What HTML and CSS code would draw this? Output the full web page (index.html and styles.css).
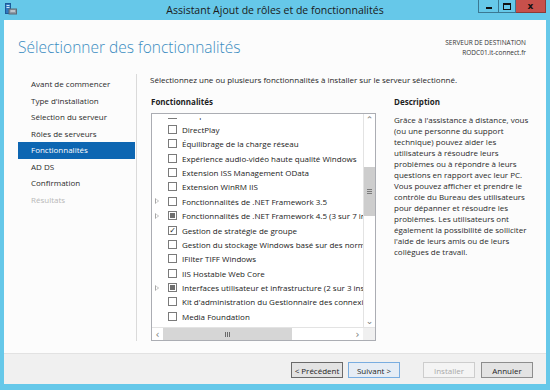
FILE: index.html
```html
<!DOCTYPE html>
<html lang="fr">
<head>
  <meta charset="UTF-8">
  <title>Assistant Ajout de rôles et de fonctionnalités</title>
  <link rel="stylesheet" href="styles.css">
</head>
<body>

<div class="window">
  <div class="titlebar">
    <svg class="app-icon" width="12" height="12" viewBox="0 0 12 12">
      <rect x="0.5" y="0.5" width="5" height="10" fill="#2f79c0" stroke="#1d5a99"/>
      <rect x="1.5" y="2" width="3" height="1" fill="#cfe4f7"/>
      <rect x="1.5" y="4" width="3" height="1" fill="#cfe4f7"/>
      <rect x="4" y="6" width="7.5" height="5" fill="#8f9aa5" stroke="#5d6975"/>
      <rect x="5.5" y="7.5" width="4.5" height="1" fill="#e9eef2"/>
    </svg>
    <div class="title">Assistant Ajout de rôles et de fonctionnalités</div>
    <div class="controls">
      <span class="ctl ctl-min"><i></i></span>
      <span class="ctl ctl-max"><i></i></span>
      <span class="ctl ctl-close">x</span>
    </div>
  </div>

  <div class="frame">
    <div class="header">
      <h1>Sélectionner des fonctionnalités</h1>
      <div class="dest">SERVEUR DE DESTINATION<br>RODC01.it-connect.fr</div>
    </div>

    <div class="main">
      <ul class="nav">
        <li>Avant de commencer</li>
        <li>Type d'installation</li>
        <li>Sélection du serveur</li>
        <li>Rôles de serveurs</li>
        <li class="active">Fonctionnalités</li>
        <li>AD DS</li>
        <li>Confirmation</li>
        <li class="disabled">Résultats</li>
      </ul>

      <div class="content">
        <p class="intro">Sélectionnez une ou plusieurs fonctionnalités à installer sur le serveur sélectionné.</p>

        <div class="cols">
          <div class="features">
            <h2>Fonctionnalités</h2>
            <div class="listbox">
              <div class="list-area">
                <div class="rows">
                  <div class="row"><span class="exp"></span><span class="chk"></span><span class="lbl">Compression différentielle à distance</span></div>
                  <div class="row"><span class="exp"></span><span class="chk"></span><span class="lbl">DirectPlay</span></div>
                  <div class="row"><span class="exp"></span><span class="chk"></span><span class="lbl">Équilibrage de la charge réseau</span></div>
                  <div class="row"><span class="exp"></span><span class="chk"></span><span class="lbl">Expérience audio-vidéo haute qualité Windows</span></div>
                  <div class="row"><span class="exp"></span><span class="chk"></span><span class="lbl">Extension ISS Management OData</span></div>
                  <div class="row"><span class="exp"></span><span class="chk"></span><span class="lbl">Extension WinRM IIS</span></div>
                  <div class="row"><span class="exp has-children"></span><span class="chk"></span><span class="lbl">Fonctionnalités de .NET Framework 3.5</span></div>
                  <div class="row"><span class="exp has-children"></span><span class="chk partial"></span><span class="lbl">Fonctionnalités de .NET Framework 4.5 (3 sur 7 installé(s))</span></div>
                  <div class="row"><span class="exp"></span><span class="chk checked">&#10003;</span><span class="lbl">Gestion de stratégie de groupe</span></div>
                  <div class="row"><span class="exp"></span><span class="chk"></span><span class="lbl">Gestion du stockage Windows basé sur des normes</span></div>
                  <div class="row"><span class="exp"></span><span class="chk"></span><span class="lbl">IFilter TIFF Windows</span></div>
                  <div class="row"><span class="exp"></span><span class="chk"></span><span class="lbl">IIS Hostable Web Core</span></div>
                  <div class="row"><span class="exp has-children"></span><span class="chk partial"></span><span class="lbl">Interfaces utilisateur et infrastructure (2 sur 3 installé(s))</span></div>
                  <div class="row"><span class="exp"></span><span class="chk"></span><span class="lbl">Kit d'administration du Gestionnaire des connexions RAS</span></div>
                  <div class="row"><span class="exp"></span><span class="chk"></span><span class="lbl">Media Foundation</span></div>
                </div>
                <div class="vscroll">
                  <div class="arrow">&#8963;</div>
                  <div class="track">
                    <div class="vthumb"><span class="grip-h"></span></div>
                  </div>
                  <div class="arrow">&#8964;</div>
                </div>
              </div>
              <div class="hscroll">
                <div class="arrow">&lsaquo;</div>
                <div class="htrack">
                  <div class="hthumb"><span class="grip-v"></span></div>
                </div>
                <div class="arrow">&rsaquo;</div>
                <div class="corner"></div>
              </div>
            </div>
          </div>

          <div class="desc">
            <h2>Description</h2>
            <p>Grâce à l'assistance à distance, vous (ou une personne du support technique) pouvez aider les utilisateurs à résoudre leurs problèmes ou à répondre à leurs questions en rapport avec leur PC. Vous pouvez afficher et prendre le contrôle du Bureau des utilisateurs pour dépanner et résoudre les problèmes. Les utilisateurs ont également la possibilité de solliciter l'aide de leurs amis ou de leurs collègues de travail.</p>
          </div>
        </div>
      </div>
    </div>

    <div class="footer">
      <button class="btn btn-prev">&lt; Précédent</button>
      <button class="btn btn-next">Suivant &gt;</button>
      <button class="btn btn-install" disabled>Installer</button>
      <button class="btn btn-cancel">Annuler</button>
    </div>
  </div>
</div>

</body>
</html>
```

FILE: styles.css
```css
html, body {
  margin: 0;
  padding: 0;
}

body {
  background-color: #66c8e9;
  font-family: 'Open Sans', 'Noto Sans', sans-serif;
  font-size: 8px;
  color: #1e1e1e;
}

.window {
  width: 550px;
  height: 390px;
  display: flex;
  flex-direction: column;
}

/* TITLE BAR */
.titlebar {
  height: 20px;
  display: flex;
  align-items: flex-start;
  position: relative;
}

.app-icon {
  margin: 3px 0 0 5px;
}

.title {
  position: absolute;
  left: 0;
  right: 0;
  top: 3px;
  text-align: center;
  font-size: 10.5px;
  line-height: 14px;
  color: #1a1a1a;
}

.controls {
  margin-left: auto;
  margin-right: 4px;
  display: flex;
  position: relative;
  z-index: 1;
}

.ctl {
  height: 13px;
  display: flex;
  align-items: center;
  justify-content: center;
  box-sizing: border-box;
  border: 1px solid #3b7893;
  border-top: none;
}

.ctl-min {
  width: 20px;
  border-right: none;
}

.ctl-min i {
  width: 6px;
  height: 2px;
  margin-top: 3px;
  background: #111;
}

.ctl-max {
  width: 18px;
}

.ctl-max i {
  width: 6px;
  height: 4px;
  border: 1px solid #111;
  border-top-width: 2px;
}

.ctl-close {
  width: 30px;
  background: #c7504b;
  border-left: none;
  border-color: #8e3a36;
  font-family: 'DejaVu Sans', sans-serif;
  font-weight: bold;
  font-size: 9px;
  color: #111;
  line-height: 12px;
}

/* FRAME */
.frame {
  margin: 0 4px;
  height: 364px;
  background: #fcfcfc;
  display: flex;
  flex-direction: column;
}

.header {
  height: 54px;
  display: flex;
  justify-content: space-between;
  align-items: flex-start;
  padding: 0 20px 0 14px;
  box-sizing: border-box;
}

h1 {
  margin: 15px 0 0;
  font-size: 15.5px;
  font-weight: 300;
  line-height: 24px;
  color: #3a8cc1;
}

.dest {
  margin-top: 18px;
  font-size: 6.5px;
  line-height: 10px;
  text-align: right;
  color: #333;
}

.main {
  height: 279px;
  display: flex;
  align-items: flex-start;
}

/* NAV */
.nav {
  list-style: none;
  margin: 0;
  width: 133px;
  height: 267px;
  padding: 2px 1px 0 14px;
  box-sizing: border-box;
  border-right: 1px solid #dadada;
}

.nav li {
  height: 16.5px;
  line-height: 16.5px;
  padding-left: 13px;
  font-size: 8px;
  color: #2b2b2b;
}

.nav li.active {
  background: #0d66b2;
  color: #fff;
}

.nav li.disabled {
  color: #b8b8b8;
}

/* CONTENT */
.content {
  margin-left: 13px;
  flex: 1;
}

.intro {
  margin: 0;
  line-height: 11px;
}

.cols {
  display: flex;
  margin-top: 11px;
}

h2 {
  margin: 0;
  font-size: 8px;
  font-weight: bold;
  line-height: 11px;
}

.features h2 {
  padding-left: 1px;
}

.listbox {
  margin-top: 6px;
  margin-left: 1px;
  width: 225px;
  height: 228px;
  box-sizing: border-box;
  border: 1px solid #abadb3;
  background: #fff;
  display: flex;
  flex-direction: column;
}

.list-area {
  display: flex;
  height: 213px;
  overflow: hidden;
}

.rows {
  flex: 1;
  overflow: hidden;
  margin-top: 3.5px;
}

.rows .row:first-child {
  margin-top: -9.8px;
}

.row {
  height: 14.4px;
  display: flex;
  align-items: center;
  white-space: nowrap;
}

.exp {
  width: 5px;
  height: 7px;
  margin-left: 3px;
  flex: none;
}

.exp.has-children {
  width: 0;
  height: 0;
  border-left: 4px solid #a6a6a6;
  border-top: 3.5px solid transparent;
  border-bottom: 3.5px solid transparent;
  position: relative;
  margin-right: 1px;
}

.exp.has-children::after {
  content: "";
  position: absolute;
  left: -3px;
  top: -2px;
  border-left: 2.4px solid #fff;
  border-top: 2px solid transparent;
  border-bottom: 2px solid transparent;
}

.chk {
  flex: none;
  width: 9px;
  height: 9px;
  margin-left: 8px;
  box-sizing: border-box;
  border: 1px solid #7a7a7a;
  background: #fff;
  display: flex;
  align-items: center;
  justify-content: center;
  font-size: 8px;
  line-height: 9px;
  color: #222;
}

.chk.partial::after {
  content: "";
  width: 5px;
  height: 5px;
  background: #6e6e6e;
}

.chk.checked {
  font-family: 'DejaVu Sans', sans-serif;
  font-size: 8px;
  font-weight: bold;
}

.lbl {
  margin-left: 5px;
  color: #222;
}

/* SCROLLBARS */
.vscroll {
  width: 12px;
  flex: none;
  border-left: 1px solid #e3e3e3;
  box-sizing: border-box;
  display: flex;
  flex-direction: column;
  background: #fff;
}

.arrow {
  height: 12px;
  width: 11px;
  flex: none;
  display: flex;
  align-items: center;
  justify-content: center;
  color: #7a7a7a;
  font-size: 9px;
  font-family: 'DejaVu Sans', sans-serif;
}

.track {
  flex: 1;
  padding-top: 41px;
}

.vthumb {
  height: 49px;
  background: #cdcdcd;
  display: flex;
  align-items: center;
  justify-content: center;
}

.grip-h {
  width: 5px;
  height: 5px;
  background: repeating-linear-gradient(#7a7a7a 0 1px, transparent 1px 2px);
}

.hscroll {
  height: 13px;
  display: flex;
  border-top: 1px solid #e3e3e3;
  box-sizing: border-box;
}

.hscroll .arrow {
  height: 12px;
  font-size: 10px;
}

.htrack {
  flex: 1;
  display: flex;
}

.hthumb {
  width: 129px;
  background: #d6d6d6;
  display: flex;
  align-items: center;
  justify-content: center;
}

.grip-v {
  width: 5px;
  height: 5px;
  background: repeating-linear-gradient(90deg, #6a6a6a 0 1px, transparent 1px 2px);
}

.corner {
  width: 12px;
  background: #f0f0f0;
}

/* DESCRIPTION */
.desc {
  margin-left: 18px;
  width: 140px;
}

.desc p {
  margin: 7px 0 0;
  line-height: 11px;
  color: #2a2a2a;
}

/* FOOTER */
.footer {
  margin-top: auto;
  height: 31px;
  box-sizing: border-box;
  border-top: 1px solid #e2e2e2;
  background: #f0f0f0;
  display: flex;
  justify-content: flex-end;
  align-items: flex-start;
  padding: 8px 13px 0 0;
}

.btn {
  width: 52px;
  height: 16px;
  padding: 0;
  font-family: 'Open Sans', 'Noto Sans', sans-serif;
  font-size: 8px;
  color: #1e1e1e;
  background: #e3e3e3;
  border: 1px solid #8d8d8d;
  border-radius: 0;
}

.btn-prev {
  border-color: #6a6a6a;
}

.btn-next {
  margin-left: 5px;
  border-color: #79ade0;
  background: #e6edf5;
}

.btn-install {
  margin-left: 23px;
  border-color: #cdcdcd;
  background: #f4f4f4;
  color: #a9a9a9;
}

.btn-cancel {
  margin-left: 6px;
}
```
